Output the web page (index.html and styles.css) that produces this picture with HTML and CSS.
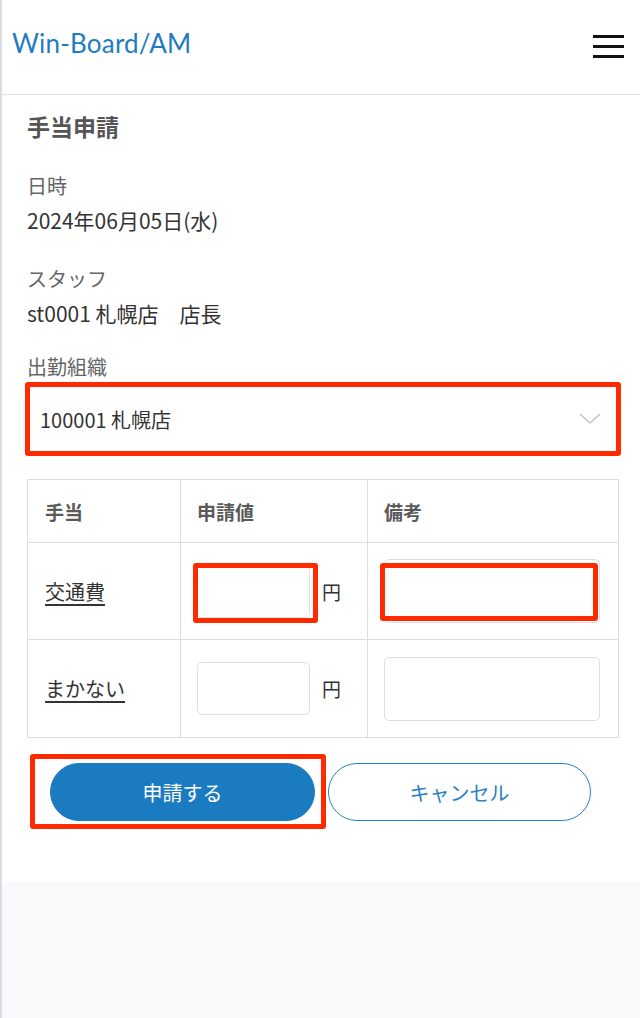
FILE: index.html
```html
<!DOCTYPE html>
<html lang="ja">
<head>
<meta charset="utf-8">
<title>手当申請</title>
<link rel="stylesheet" href="styles.css">
</head>
<body>
<div class="page">
  <header class="topbar">
    <div class="logo">Win-Board/AM</div>
    <button class="menu" aria-label="menu">
      <span class="bar"></span><span class="bar"></span><span class="bar"></span>
    </button>
  </header>
  <main class="content">
    <h1 class="title">手当申請</h1>
    <div class="field">
      <div class="label">日時</div>
      <div class="value">2024年06月05日(水)</div>
    </div>
    <div class="field">
      <div class="label">スタッフ</div>
      <div class="value">st0001 札幌店　店長</div>
    </div>
    <div class="field field-org">
      <div class="label">出勤組織</div>
      <div class="select mark mark-select">
        <span class="select-text">100001 札幌店</span>
        <svg class="chevron" width="22" height="14" viewBox="0 0 22 14"><path d="M1 2 L11 11 L21 2" fill="none" stroke="#c4c4c4" stroke-width="1.6"/></svg>
      </div>
    </div>
    <table class="grid">
      <colgroup><col class="c1"><col class="c2"><col class="c3"></colgroup>
      <thead>
        <tr class="head-row"><th>手当</th><th>申請値</th><th>備考</th></tr>
      </thead>
      <tbody>
        <tr class="row row1">
          <td><a class="link" href="#">交通費</a></td>
          <td><div class="amount"><span class="mark mark-amount"><input class="num" type="text"></span><span class="yen">円</span></div></td>
          <td><span class="mark mark-note"><input class="note" type="text"></span></td>
        </tr>
        <tr class="row row2">
          <td><a class="link" href="#">まかない</a></td>
          <td><div class="amount"><input class="num num2" type="text"><span class="yen">円</span></div></td>
          <td><input class="note" type="text"></td>
        </tr>
      </tbody>
    </table>
    <div class="actions">
      <span class="mark mark-submit"><button class="btn btn-primary">申請する</button></span>
      <button class="btn btn-outline">キャンセル</button>
    </div>
  </main>
  <div class="footer-area"></div>
</div>
</body>
</html>
```
FILE: styles.css
```css
* { box-sizing: border-box; }
html, body { margin: 0; padding: 0; background: #fff; }
body {
  font-family: "Noto Sans CJK JP", "Noto Sans", sans-serif;
  color: #333;
}
.page {
  width: 640px;
  min-height: 1018px;
  border-left: 2px solid #dcdce2;
  display: flex;
  flex-direction: column;
}
.topbar {
  height: 95px;
  border-bottom: 1px solid #e2e2e2;
  display: flex;
  align-items: center;
  justify-content: space-between;
  padding: 0 16px 0 10px;
}
.logo {
  font-family: Lato, "Noto Sans", sans-serif;
  font-size: 26px;
  color: #1f7cc2;
  letter-spacing: 0.2px;
  margin-top: -8px;
}
.menu {
  background: none;
  border: 0;
  padding: 0;
  width: 31px;
  display: flex;
  flex-direction: column;
  gap: 7px;
  margin-top: -1px;
}
.bar { display: block; height: 3px; background: #111; width: 31px; }
.content {
  padding: 15px 22px 61px 25px;
}
.title {
  margin: 0;
  font-size: 23px;
  line-height: 32px;
  font-weight: 700;
  color: #555;
}
.field { margin-top: 29px; }
.field-org { margin-top: 24px; }
.label {
  font-size: 20px;
  line-height: 30px;
  color: #666;
}
.value {
  margin-top: 4px;
  font-size: 21px;
  line-height: 30px;
  color: #333;
}
.select {
  margin-top: 2px;
  height: 70px;
  border: 1px solid #dcdcdc;
  display: flex;
  align-items: center;
  justify-content: space-between;
  padding: 0 16px 0 12px;
  font-size: 20px;
  color: #333;
}
.chevron { display: block; }
.mark { position: relative; display: inline-block; }
.select.mark { display: flex; }
.mark::after {
  content: "";
  position: absolute;
  border: 5px solid #ff2a00;
  border-radius: 3px;
  pointer-events: none;
}
.mark-select::after { top: -3px; right: -4px; bottom: -3px; left: -3px; }
.mark-amount::after { top: -2px; right: -8px; bottom: -5px; left: -4px; }
.mark-note::after { top: 4px; right: 2px; bottom: 2px; left: -4px; }
.mark-submit::after { top: -9px; right: -11px; bottom: -8px; left: -20px; }

.grid {
  margin-top: 25px;
  width: 591px;
  border-collapse: collapse;
  table-layout: fixed;
}
.c1 { width: 153px; }
.c2 { width: 187px; }
.c3 { width: 251px; }
.grid th, .grid td {
  border: 1px solid #dedede;
  text-align: left;
  vertical-align: middle;
  padding: 0 0 0 17px;
}
.grid th {
  font-size: 19px;
  font-weight: 700;
  color: #5a5a5a;
}
.grid th:nth-child(n+2), .grid td:nth-child(n+2) { padding-left: 16px; }
.head-row { height: 63px; }
.row1 { height: 97px; }
.row2 { height: 98px; }
.link {
  font-size: 20px;
  color: #333;
  text-decoration: underline;
  text-underline-offset: 4px;
}
.amount { display: flex; align-items: center; gap: 12px; }
.mark-amount { display: block; }
.mark-note { display: block; width: 216px; }
input {
  display: block;
  appearance: none;
  border: 1px solid #e0e0e0;
  border-radius: 5px;
  background: #fff;
  margin: 0;
  padding: 0 8px;
  font: inherit;
}
.num { width: 113px; height: 53px; }
.note { width: 216px; height: 64px; }
.yen { font-size: 19px; color: #333; }
.actions {
  margin-top: 25px;
  padding-left: 23px;
  display: flex;
  gap: 13px;
}
.actions .mark { display: block; }
.btn {
  display: block;
  height: 58px;
  border-radius: 29px;
  font-family: "Noto Sans CJK JP", sans-serif;
  font-size: 20px;
  cursor: pointer;
}
.btn-primary {
  width: 265px;
  background: #1a7bc1;
  border: 1px solid #1a7bc1;
  color: #fff;
}
.btn-outline {
  width: 263px;
  background: #fff;
  border: 1.5px solid #2a80c3;
  color: #2a80c3;
}
.footer-area {
  flex: 1;
  background: #f9fafc;
}
```
